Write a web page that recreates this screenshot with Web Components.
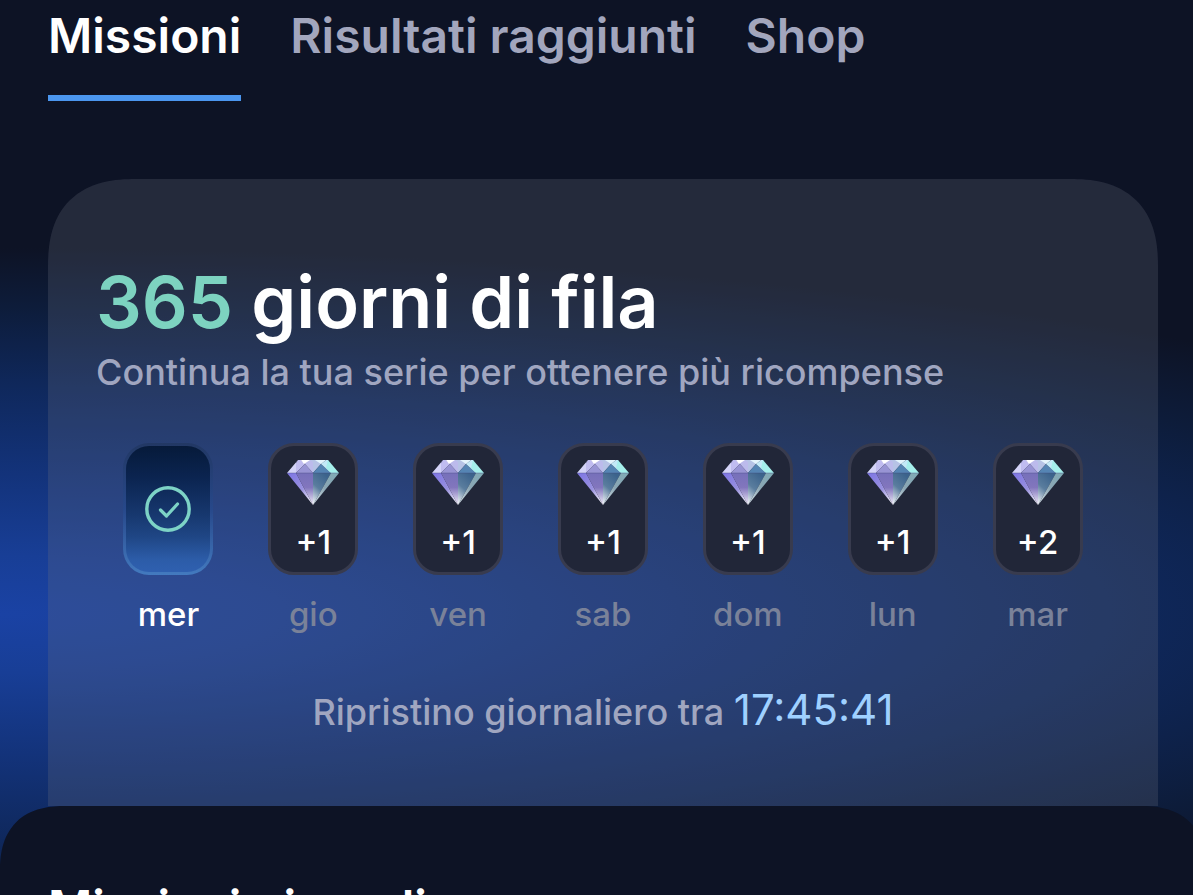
<!DOCTYPE html>
<html lang="it">
<head>
<meta charset="utf-8">
<meta name="viewport" content="width=device-width, initial-scale=1">
<title>Missioni</title>
<style>
  html, body {
    height: 100%;
    margin: 0;
  }

  body {
    overflow: hidden;
    background: #0d1325;
    color: #fff;
    font-family: Inter, "Liberation Sans", sans-serif;
  }
</style>
</head>
<body>
<rewards-page>
  <tab-bar slot="tabs">
    <tab-item selected>Missioni</tab-item>
    <tab-item>Risultati raggiunti</tab-item>
    <tab-item>Shop</tab-item>
  </tab-bar>
  <streak-card days="365" reset="17:45:41">
    <span slot="unit">giorni di fila</span>
    <span slot="hint">Continua la tua serie per ottenere più ricompense</span>
    <streak-day slot="days" done>mer</streak-day>
    <streak-day slot="days" reward="+1">gio</streak-day>
    <streak-day slot="days" reward="+1">ven</streak-day>
    <streak-day slot="days" reward="+1">sab</streak-day>
    <streak-day slot="days" reward="+1">dom</streak-day>
    <streak-day slot="days" reward="+1">lun</streak-day>
    <streak-day slot="days" reward="+2">mar</streak-day>
    <span slot="reset-label">Ripristino giornaliero tra</span>
  </streak-card>
  <mission-sheet slot="sheet">Missioni giornaliere</mission-sheet>
</rewards-page>

<script>
class BaseElement extends HTMLElement {
  constructor() {
    super();
    this.attachShadow({ mode: "open" });
  }

  connectedCallback() {
    this.shadowRoot.innerHTML = this.render();
  }
}

class RewardsPage extends BaseElement {
  render() {
    return `
      <style>
        :host {
          display: flex;
          flex-direction: column;
          min-height: 100vh;
          background:
            radial-gradient(ellipse 150% 366px at 0 614px,
              #1a42a4 0%, #183e96 16%, #13337b 38%, #0f285c 62%, #0d1c3a 84%, #0d1325 100%)
            #0d1325;
        }

        main {
          padding: 78px 35px 0 48px;
        }

        ::slotted(mission-sheet) {
          flex: 1;
          margin-right: -13px;
        }
      </style>
      <slot name="tabs"></slot>
      <main><slot></slot></main>
      <slot name="sheet"></slot>
    `;
  }
}

class TabBar extends BaseElement {
  render() {
    return `
      <style>
        :host {
          display: block;
        }

        nav {
          display: flex;
          gap: 49px;
          padding: 6px 48px 0;
        }
      </style>
      <nav role="tablist"><slot></slot></nav>
    `;
  }
}

class TabItem extends BaseElement {
  render() {
    const selected = this.hasAttribute("selected");
    return `
      <style>
        :host {
          display: block;
        }

        button {
          display: block;
          margin: 0;
          padding: 0 0 29px;
          border: 0;
          border-bottom: 6px solid transparent;
          background: none;
          color: #a2a6bd;
          font: 600 48px/60px Inter, "Liberation Sans", sans-serif;
          white-space: nowrap;
          cursor: pointer;
        }

        button[aria-selected="true"] {
          border-bottom-color: #4b96ef;
          color: #fff;
        }
      </style>
      <button type="button" role="tab" aria-selected="${selected}"><slot></slot></button>
    `;
  }
}

class StreakCard extends BaseElement {
  render() {
    return `
      <style>
        :host {
          display: block;
          padding: 79px 48px 66px;
          border-radius: 72px 72px 0 0;
          background: rgba(106, 112, 128, 0.25);
        }

        @supports (corner-shape: squircle) {
          :host {
            border-radius: 88px 88px 0 0;
            corner-shape: superellipse(1.3);
          }
        }

        h1 {
          margin: 0;
          font-size: 72px;
          line-height: 88px;
          font-weight: 600;
        }

        .count {
          color: #7dd3c0;
        }

        .hint {
          margin: 4px 0 49px;
          color: #a0a6c0;
          font-size: 36px;
          font-weight: 500;
          line-height: 44px;
        }

        .days {
          display: grid;
          grid-template-columns: repeat(7, 1fr);
        }

        .reset {
          margin: 48px 0 0;
          color: #a0a6c0;
          font-size: 36px;
          font-weight: 500;
          line-height: 56px;
          text-align: center;
        }

        time {
          color: #9fd0ff;
          font-size: 42px;
          font-weight: 400;
        }
      </style>
      <h1><span class="count">${this.getAttribute("days")}</span> <slot name="unit"></slot></h1>
      <p class="hint"><slot name="hint"></slot></p>
      <div class="days"><slot name="days"></slot></div>
      <p class="reset"><slot name="reset-label"></slot> <time>${this.getAttribute("reset")}</time></p>
    `;
  }
}

class StreakDay extends BaseElement {
  render() {
    const done = this.hasAttribute("done");
    const content = done
      ? `<check-icon></check-icon>`
      : `<diamond-icon></diamond-icon><span class="reward">${this.getAttribute("reward")}</span>`;
    return `
      <style>
        :host {
          display: flex;
          flex-direction: column;
          align-items: center;
          gap: 19px;
          color: #7a8299;
          font-size: 33px;
          font-weight: 500;
          line-height: 40px;
        }

        :host([done]) {
          color: #fff;
        }

        .tile {
          box-sizing: border-box;
          display: flex;
          flex-direction: column;
          align-items: center;
          gap: 17px;
          width: 90px;
          height: 132px;
          padding-top: 14px;
          border: 3px solid #383b4e;
          border-radius: 26px;
          background: #212638;
        }

        :host([done]) .tile {
          justify-content: center;
          padding-top: 0;
          border-color: transparent;
          background:
            linear-gradient(#061a3a, #0b2450 25%, #17386f 55%, #1f4685 72%, #2c5ca8 90%, #2f60b0) padding-box,
            linear-gradient(#223864, #27488a 50%, #437abf) border-box;
        }

        .reward {
          color: #fff;
        }
      </style>
      <div class="tile">${content}</div>
      <slot></slot>
    `;
  }
}

class CheckIcon extends BaseElement {
  render() {
    return `
      <style>
        :host, svg {
          display: block;
        }
      </style>
      <svg width="46" height="46" viewBox="0 0 46 46" fill="none" stroke="#7dd3c6" aria-hidden="true">
        <circle cx="23" cy="23" r="21.2" stroke-width="3.4"/>
        <path d="M15.5 24 21.5 30 32.5 18" stroke-width="3.2" stroke-linecap="round" stroke-linejoin="round"/>
      </svg>
    `;
  }
}

class DiamondIcon extends BaseElement {
  render() {
    return `
      <style>
        :host, svg {
          display: block;
        }
      </style>
      <svg width="54" height="45" viewBox="-1 0 54 45" aria-hidden="true">
        <defs>
          <linearGradient id="left" x1="0" y1="0" x2="0.8" y2="1">
            <stop offset="0" stop-color="#7c74e4"/>
            <stop offset="0.6" stop-color="#9a92de"/>
            <stop offset="1" stop-color="#f1effb"/>
          </linearGradient>
          <linearGradient id="mid-left" x1="0" y1="0" x2="0" y2="1">
            <stop offset="0" stop-color="#7670ba"/>
            <stop offset="0.45" stop-color="#8276bd"/>
            <stop offset="1" stop-color="#f0ecf8"/>
          </linearGradient>
          <linearGradient id="mid-right" x1="0.6" y1="0" x2="0.1" y2="1">
            <stop offset="0" stop-color="#3c638c"/>
            <stop offset="0.5" stop-color="#5a7d9e"/>
            <stop offset="1" stop-color="#f0f3f8"/>
          </linearGradient>
          <linearGradient id="right" x1="1" y1="0" x2="0" y2="1">
            <stop offset="0" stop-color="#7eaab6"/>
            <stop offset="0.5" stop-color="#8ba6b4"/>
            <stop offset="1" stop-color="#dce8ef"/>
          </linearGradient>
        </defs>
        <path d="M0 13H9L26 45Z" fill="url(#left)"/>
        <path d="M9 13H26V45Z" fill="url(#mid-left)"/>
        <path d="M26 13H44L26 45Z" fill="url(#mid-right)"/>
        <path d="M44 13H52L26 45Z" fill="url(#right)"/>
        <path d="M11 0 0 13H9V3Z" fill="#d3d3f8"/>
        <path d="M11 0H14L18 4 9 13V3Z" fill="#c0bcf0"/>
        <path d="M18 4 9 13H26Z" fill="#9894d4"/>
        <path d="M14 0H26V13L18 4Z" fill="#bcbbec"/>
        <path d="M14 0H23L17 4Z" fill="#fff"/>
        <path d="M23 0H38L34 4 26 13V2Z" fill="#b6c3e6"/>
        <path d="M28 0H39L34 4Z" fill="#e4f5fd"/>
        <path d="M34 4 26 13H44Z" fill="#5585b4"/>
        <path d="M39 0H41L44 13 34 4Z" fill="#c3eaf8"/>
        <path d="M41 0 52 13H44L39 8Z" fill="#a5efec"/>
        <path d="M0 13H52" stroke="#3f4676" stroke-opacity="0.45" stroke-width="0.8"/>
      </svg>
    `;
  }
}

class MissionSheet extends BaseElement {
  render() {
    return `
      <style>
        :host {
          display: block;
          padding: 72px 48px 48px;
          border-radius: 56px 56px 0 0;
          background: #0d1325;
        }

        @supports (corner-shape: squircle) {
          :host {
            border-radius: 66px 66px 0 0;
            corner-shape: superellipse(1.3);
          }
        }

        h2 {
          margin: 0;
          font-size: 48px;
          line-height: 60px;
          font-weight: 600;
        }
      </style>
      <h2><slot></slot></h2>
    `;
  }
}

customElements.define("rewards-page", RewardsPage);
customElements.define("tab-bar", TabBar);
customElements.define("tab-item", TabItem);
customElements.define("streak-card", StreakCard);
customElements.define("streak-day", StreakDay);
customElements.define("check-icon", CheckIcon);
customElements.define("diamond-icon", DiamondIcon);
customElements.define("mission-sheet", MissionSheet);
</script>
</body>
</html>
